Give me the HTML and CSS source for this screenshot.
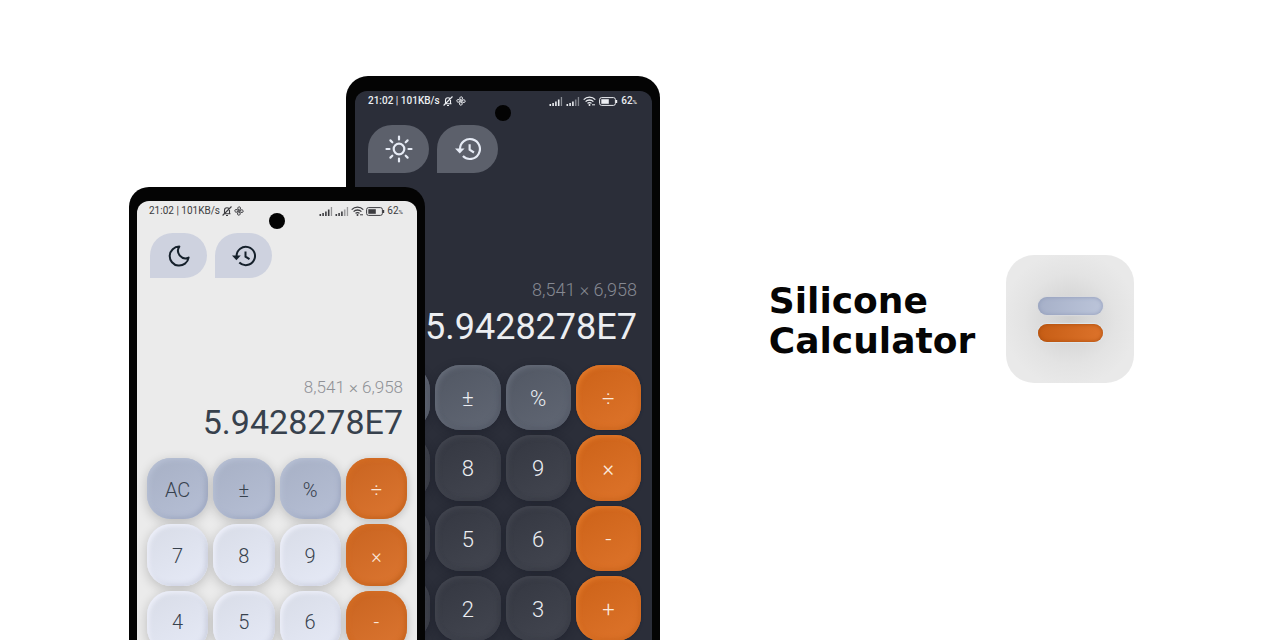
FILE: index.html
```html
<!DOCTYPE html>
<html lang="en">
<head>
<meta charset="utf-8">
<meta name="viewport" content="width=device-width, initial-scale=1">
<title>Silicone Calculator</title>
<link rel="stylesheet" href="styles.css">
</head>
<body>
<svg class="sprite" aria-hidden="true">
  <symbol id="bell-off" viewBox="0 0 10 10"><path d="M1.500 7.800h7M2.500 7.600V4.200a2.500 2.500 0 0 1 5 0v3.400M4 9.500h2M9.500.500.600 9.500" fill="none" stroke="currentColor" stroke-width="1.1"/></symbol>
  <symbol id="fan" viewBox="0 0 10 10"><g fill="none" stroke="currentColor" stroke-width="1"><circle cx="5" cy="5" r=".8"/><path d="M4.7 4C3 2.600 3.900.7 5.300.8c1.500.1 1.500 2 .3 3.300"/><path d="M6 4.700c1.400-1.700 3.300-.8 3.200.6-.1 1.500-2 1.500-3.300.3"/><path d="M5.300 6c1.700 1.400.8 3.300-.6 3.200-1.500-.1-1.500-2-.3-3.300"/><path d="M4 5.300C2.600 7 .7 6.100.8 4.700c.1-1.500 2-1.500 3.300-.3"/></g></symbol>
  <symbol id="signal" viewBox="0 0 13 9"><g fill="currentColor"><path d="M0 7h1.600v2H0zM2.800 6h1.600v3H2.800zM5.600 4.500h1.600V9H5.600zM8.400 2.500H10V9H8.400z"/><path d="M11.300 0h1.300v9h-1.300z" opacity=".5"/></g></symbol>
  <symbol id="signal-low" viewBox="0 0 13 9"><g fill="currentColor"><path d="M0 7h1.600v2H0zM2.800 6h1.600v3H2.800zM5.600 4.500h1.600V9H5.600z"/><path d="M8.400 2.500H10V9H8.400zM11.300 0h1.300v9h-1.300z" opacity=".45"/></g></symbol>
  <symbol id="wifi" viewBox="0 0 13 10"><path d="M.7 3.600a8.200 8.200 0 0 1 11.600 0M2.600 5.600a5.500 5.500 0 0 1 7.800 0M4.500 7.400a2.800 2.800 0 0 1 4 0" fill="none" stroke="currentColor" stroke-width="1.300"/><circle cx="6.500" cy="9" r="1" fill="currentColor"/><path d="M9 8.800h3" stroke="currentColor"/></symbol>
  <symbol id="battery" viewBox="0 0 19 9"><rect x=".6" y=".6" width="15.800" height="7.800" rx="2" fill="none" stroke="currentColor" stroke-width="1"/><path d="M2.300 2.200h7.500v4.600H2.300z" fill="currentColor"/><path d="M17.500 3v3" stroke="currentColor" stroke-width="1.400"/></symbol>
  <symbol id="history" viewBox="0 0 24 22"><path d="M4.600 11a9.200 9.200 0 1 1 2.700 6.500M13.500 6.500v5.200l4 2.500" fill="none" stroke="currentColor" stroke-width="2"/><path d="M0 10.500h8.800l-4.400 4.700z" fill="currentColor"/></symbol>
  <symbol id="moon" viewBox="0 0 22 22"><path d="M11.300 1.600A9.500 9.500 0 1 0 20.600 12.600 7.500 7.500 0 0 1 11.300 1.600z" fill="none" stroke="currentColor" stroke-width="2" stroke-linejoin="round"/></symbol>
  <symbol id="sun" viewBox="0 0 28 28"><g fill="none" stroke="currentColor" stroke-width="2.200" stroke-linecap="round"><circle cx="14" cy="14" r="5.300"/><path d="M14 1.500v3M14 23.500v3M1.500 14h3M23.500 14h3M5.400 5.400l1.900 1.900M20.700 20.700l1.900 1.900M22.600 5.400l-1.900 1.900M7.300 20.700l-1.900 1.900"/></g></symbol>
</svg>

<main class="hero">
  <div class="phones">
    <section class="phone phone-light" aria-label="Light theme">
      <div class="camera"></div>
      <div class="screen">
        <div class="status">
          <span>21:02 | 101KB/s</span>
          <svg class="status-small"><use href="#bell-off"/></svg>
          <svg class="status-small"><use href="#fan"/></svg>
          <span class="spacer"></span>
          <svg class="status-signal"><use href="#signal"/></svg>
          <svg class="status-signal"><use href="#signal-low"/></svg>
          <svg class="status-wifi"><use href="#wifi"/></svg>
          <svg class="status-battery"><use href="#battery"/></svg>
          <span class="level">62<small>%</small></span>
        </div>
        <div class="actions">
          <button class="action" aria-label="Dark theme"><svg class="icon-theme"><use href="#moon"/></svg></button>
          <button class="action" aria-label="History"><svg class="icon-history"><use href="#history"/></svg></button>
        </div>
        <div class="display">
          <div class="expression">8,541 × 6,958</div>
          <div class="result">5.9428278E7</div>
        </div>
        <div class="keys">
          <button class="key key-fn">AC</button><button class="key key-fn">±</button><button class="key key-fn">%</button><button class="key key-op">÷</button>
          <button class="key">7</button><button class="key">8</button><button class="key">9</button><button class="key key-op">×</button>
          <button class="key">4</button><button class="key">5</button><button class="key">6</button><button class="key key-op">-</button>
        </div>
      </div>
    </section>
    <section class="phone phone-dark" aria-label="Dark theme">
      <div class="camera"></div>
      <div class="screen">
        <div class="status">
          <span>21:02 | 101KB/s</span>
          <svg class="status-small"><use href="#bell-off"/></svg>
          <svg class="status-small"><use href="#fan"/></svg>
          <span class="spacer"></span>
          <svg class="status-signal"><use href="#signal"/></svg>
          <svg class="status-signal"><use href="#signal-low"/></svg>
          <svg class="status-wifi"><use href="#wifi"/></svg>
          <svg class="status-battery"><use href="#battery"/></svg>
          <span class="level">62<small>%</small></span>
        </div>
        <div class="actions">
          <button class="action" aria-label="Light theme"><svg class="icon-theme"><use href="#sun"/></svg></button>
          <button class="action" aria-label="History"><svg class="icon-history"><use href="#history"/></svg></button>
        </div>
        <div class="display">
          <div class="expression">8,541 × 6,958</div>
          <div class="result">5.9428278E7</div>
        </div>
        <div class="keys">
          <button class="key key-fn" aria-label="AC"></button><button class="key key-fn">±</button><button class="key key-fn">%</button><button class="key key-op">÷</button>
          <button class="key" aria-label="7"></button><button class="key">8</button><button class="key">9</button><button class="key key-op">×</button>
          <button class="key" aria-label="4"></button><button class="key">5</button><button class="key">6</button><button class="key key-op">-</button>
          <button class="key" aria-label="1"></button><button class="key">2</button><button class="key">3</button><button class="key key-op">+</button>
        </div>
      </div>
    </section>
  </div>
  <div class="brand">
    <h1 class="title">Silicone<br>Calculator</h1>
    <div class="logo"><span class="bar bar-blue"></span><span class="bar bar-orange"></span></div>
  </div>
</main>
</body>
</html>
```

FILE: styles.css
```css
* { box-sizing: border-box; }

body {
  margin: 0;
  background: #fff;
  font-family: Roboto, "Liberation Sans", sans-serif;
}

.sprite { position: absolute; width: 0; height: 0; }

.hero {
  display: flex;
  height: 100vh;
  overflow: hidden;
}

.phones {
  display: flex;
  align-items: flex-start;
  flex: none;
  margin-left: 129px;
}

.phone {
  position: relative;
  background: #040404;
}

.phone-light {
  --ink: #37414d;
  --status-ink: #3c3c40;
  z-index: 1;
  width: 296px;
  margin-top: 187px;
  padding: 14px 8px;
  border-radius: 20px;
}

.phone-dark {
  --ink: #eceef2;
  --status-ink: #eceef2;
  width: 314px;
  margin: 76px 0 0 -79px;
  padding: 15px 8px 15px 9px;
  border-radius: 22px;
}

.camera {
  position: absolute;
  top: 26px;
  left: 50%;
  width: 16px;
  height: 16px;
  margin-left: -8px;
  border-radius: 50%;
  background: #030303;
}

.phone-dark .camera { top: 29px; }

.screen {
  min-height: 640px;
  padding: 0 10px;
  border-radius: 12px;
  color: var(--ink);
}

.phone-light .screen { background: #ebebeb; }
.phone-dark .screen { background: #2b2e39; padding-right: 11px; }

.status {
  display: flex;
  align-items: center;
  gap: 3px;
  height: 20px;
  padding: 0 4px 0 3px;
  color: var(--status-ink);
  font-size: 10px;
  font-weight: 500;
  line-height: 12px;
}

.phone-light .status {
  gap: 2px;
  padding-left: 2px;
  font-weight: 400;
}

.spacer { flex: 1; }
.status-small { width: 10px; height: 10px; }
.status-signal { width: 14px; height: 9px; }
.status-wifi { width: 13px; height: 10px; }
.status-battery { width: 19px; height: 9px; }
.level small { font-size: 6px; }

.actions {
  display: flex;
  gap: 8px;
  padding: 12px 3px 0;
}

.phone-dark .actions { padding: 14px 3px 0; }

.action {
  display: flex;
  align-items: center;
  justify-content: center;
  width: 57px;
  height: 45px;
  padding: 0;
  border: 0;
  border-radius: 23px 23px 23px 0;
  background: #ced2df;
  color: #15202b;
}

.phone-dark .action {
  width: 61px;
  height: 48px;
  border-radius: 24px 24px 24px 0;
  background: #5c606b;
  color: #e6ebf5;
}

.icon-theme { width: 22px; height: 22px; }
.icon-history { width: 24px; height: 22px; }
.phone-dark .icon-theme { width: 28px; height: 28px; }
.phone-dark .icon-history { width: 26px; height: 24px; }

.display {
  padding: 97px 4px 0;
  text-align: right;
}

.phone-dark .display { padding-top: 105px; }

.expression {
  color: #8f9196;
  font-size: 17px;
  font-weight: 300;
  line-height: 24px;
}

.result {
  font-size: 34px;
  line-height: 46px;
}

.phone-dark .expression { color: #858891; font-size: 18px; }
.phone-dark .result { font-size: 36px; line-height: 50px; }

.keys {
  display: grid;
  grid-template-columns: repeat(4, 1fr);
  gap: 5px;
  padding-top: 13px;
}

.key {
  aspect-ratio: 1;
  min-width: 0;
  padding: 2px 0 0;
  border: 0;
  border-radius: 24px;
  background: linear-gradient(150deg, #d8dce7, #e6eaf7);
  box-shadow: inset 2px 2px 4px #eef0fa, inset -2px -2px 5px #d0d4e3, 0 3px 12px rgba(0, 0, 0, .2);
  color: var(--ink);
  font-family: inherit;
  font-size: 20px;
  font-weight: 300;
}

.key-fn {
  background: linear-gradient(150deg, #a7b0c5, #b6bfd5);
  box-shadow: inset 2px 2px 5px #b7c0d4, inset -2px -2px 5px #a0aac3, 0 3px 12px rgba(0, 0, 0, .2);
}

.phone-dark .key {
  border-radius: 25px;
  background: linear-gradient(150deg, #343741, #434650);
  box-shadow: inset 2px 2px 5px #42454f, inset -2px -2px 5px #3a3d47, 0 2px 8px rgba(20, 22, 34, .4);
  font-size: 22px;
}

.phone-dark .key-fn {
  background: linear-gradient(150deg, #515763, #616774);
  box-shadow: inset 2px 2px 5px #666c79, inset -2px -2px 5px #555b68, 0 2px 8px rgba(20, 22, 34, .4);
}

.phone .key-op {
  background: linear-gradient(150deg, #c96420, #dc7631);
  box-shadow: inset 2px 2px 4px #d46d24, inset -2px -2px 5px #c5641f, 0 2px 8px rgba(0, 0, 0, .2);
  color: #fbe9dc;
}

.phone-dark .key-op {
  background: linear-gradient(150deg, #cc6218, #de742b);
  box-shadow: inset 2px 2px 4px #e0782a, inset -2px -2px 5px #cc671f, 0 0 3px #14223a;
}

.brand {
  display: flex;
  flex: 1;
  align-items: center;
  justify-content: center;
  gap: 31px;
  padding: 0 37px 2px 0;
}

.title {
  margin: 0;
  padding-top: 3px;
  color: #050505;
  font-family: "Comic Sans MS", "DejaVu Sans", sans-serif;
  font-size: 36px;
  font-weight: 700;
  line-height: 40px;
}

.logo {
  display: flex;
  flex: none;
  flex-direction: column;
  align-items: center;
  justify-content: center;
  gap: 9px;
  width: 128px;
  height: 128px;
  border-radius: 28px;
  background: radial-gradient(circle, #cfcfcf 0%, #dadada 30%, #e3e3e3 50%, #e9e9e9 75%);
}

.bar {
  width: 65px;
  height: 18px;
  border-radius: 9px;
}

.bar-blue {
  background: linear-gradient(100deg, #a6b0c8, #bcc5da);
  box-shadow: inset 0 0 4px #8f9ab8, 0 0 1px 1px #d9dadd;
}

.bar-orange {
  background: linear-gradient(100deg, #c65d15, #dd732b);
  box-shadow: inset 0 0 4px #a84c0d, 0 0 1px 1px #dde6ec;
}
```
